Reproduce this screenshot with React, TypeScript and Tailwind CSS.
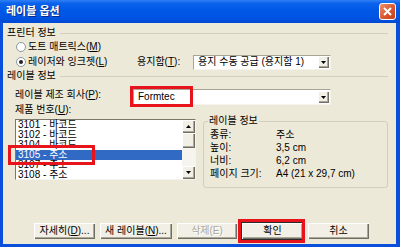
import React from "react";

const face = "bg-[#f1efe6] shadow-[inset_1px_1px_#ffffff,inset_-1px_-1px_#716f64,inset_-2px_-2px_#aca899]";

function Mn({ t, k }: { t: string; k: string }) {
  return (
    <>
      {t}(<u>{k}</u>)
    </>
  );
}

function Section({ title }: { title: string }) {
  return (
    <div className="flex items-center h-[12px]">
      <span>{title}</span>
      <div className="flex-1 h-px bg-[#d0d0bf] ml-[4px]" />
    </div>
  );
}

function Radio({ checked, children }: { checked?: boolean; children: React.ReactNode }) {
  return (
    <div className="flex items-center gap-[2px]">
      <div className="w-[10px] h-[10px] rounded-full border border-[#8a98a6] bg-white flex items-center justify-center">
        {checked && <div className="w-[4px] h-[4px] rounded-full bg-[#222]" />}
      </div>
      <span>{children}</span>
    </div>
  );
}

function DropBtn() {
  return (
    <div className={`w-[11px] h-[12px] flex items-center justify-center ${face}`}>
      <svg width="5" height="3" viewBox="0 0 5 3">
        <path d="M0 0h5L2.5 3z" fill="#000" />
      </svg>
    </div>
  );
}

function Combo({ value, className }: { value: string; className: string }) {
  return (
    <div className={`relative h-[15px] bg-white border border-[#a7a597] border-b-[#f4f3ee] border-r-[#f4f3ee] flex items-center pl-[4px] pr-[1px] ${className}`}>
      <span className="flex-1 whitespace-nowrap">{value}</span>
      <DropBtn />
    </div>
  );
}

function Btn({ w, children, def, disabled }: { w: string; children: React.ReactNode; def?: boolean; disabled?: boolean }) {
  return (
    <div className={`relative h-[16px] ${w}`}>
      <div
        className={`h-full flex items-center justify-center ${face} ${def ? "outline outline-1 outline-[#2b2b2b]" : ""} ${
          disabled ? "text-[#aca899] [text-shadow:1px_1px_#ffffff]" : ""
        }`}
      >
        {children}
      </div>
      {def && <div className="absolute left-[-4px] top-[-4px] w-[67px] h-[24px] border-[3px] border-[#e8141c] pointer-events-none" />}
    </div>
  );
}

const items = ["3101 - 바코드", "3102 - 바코드", "3104 - 바코드", "3105 - 주소", "3107 - 주소", "3108 - 주소"];

export default function App() {
  return (
    <div className="w-[400px] h-[247px] bg-[#0a4fdb] flex flex-col overflow-hidden text-[10px] leading-none text-black font-['Liberation_Sans','Noto_Sans_CJK_KR',sans-serif]">
      {/* title bar */}
      <div className="h-[23px] flex items-center pl-[6px] pr-[4px] bg-[linear-gradient(to_bottom,#2f7ff5_0%,#0a62ec_15%,#0058e6_45%,#0054e3_75%,#0049d4_100%)]">
        <span className="flex-1 text-white font-bold text-[11px] [text-shadow:1px_1px_#0a2b8a]">레이블 옵션</span>
        <div className="w-[17px] h-[17px] rounded-[3px] border border-white bg-[linear-gradient(135deg,#ef8f6c,#d8542c_60%,#c4401b)] flex items-center justify-center">
          <svg width="9" height="9" viewBox="0 0 9 9">
            <path d="M1 1l7 7M8 1L1 8" stroke="#fff" strokeWidth="2" />
          </svg>
        </div>
      </div>

      {/* dialog body */}
      <div className="flex-1 ml-[3px] mr-[4px] mb-[3px] bg-[#ece9d8] pl-[4px] pr-[8px] pt-[4px]">
        <Section title="프린터 정보" />
        <div className="pl-[9px] mt-[1px]">
          <div className="h-[14px] flex items-center">
            <Radio>
              <Mn t="도트 매트릭스" k="M" />
            </Radio>
          </div>
          <div className="h-[16px] flex items-center">
            <div className="w-[121px]">
              <Radio checked>
                <Mn t="레이저와 잉크젯" k="L" />
              </Radio>
            </div>
            <span className="w-[56px]">
              용지함(<u>T</u>):
            </span>
            <Combo value="용지 수동 공급 (용지함 1)" className="w-[138px]" />
          </div>
        </div>

        <Section title="레이블 정보" />

        <div className="pl-[8px] mt-[7px] h-[16px] flex items-start">
          <span className="w-[118px] pt-[1px]">
            레이블 제조 회사(<u>P</u>):
          </span>
          <div className="relative">
            <Combo value="Formtec" className="w-[198px] h-[16px]" />
            <div className="absolute left-[-3px] top-[-3px] w-[63px] h-[21px] border-[3px] border-[#e8141c] pointer-events-none" />
          </div>
        </div>

        <div className="pl-[8px] h-[10px] flex items-center">
          제품 번호(<u>U</u>):
        </div>

        <div className="pl-[8px] flex items-start">
          {/* list box */}
          <div className="relative mt-[4px] w-[181px] h-[61px] bg-white border border-[#7a7868] border-b-[#f4f3ee] border-r-[#f4f3ee] flex">
            <div className="flex-1">
              {items.map((it) => (
                <div
                  key={it}
                  className={`h-[10px] leading-[10px] pl-[2px] whitespace-nowrap ${
                    it.startsWith("3105") ? "bg-[#316ac5] text-white" : ""
                  }`}
                >
                  {it}
                </div>
              ))}
            </div>
            <div className="w-[13px] flex flex-col bg-[#f4f3ee]">
              <div className={`h-[13px] flex items-center justify-center ${face}`}>
                <svg width="5" height="3" viewBox="0 0 5 3">
                  <path d="M0 3h5L2.5 0z" fill="#000" />
                </svg>
              </div>
              <div className={`h-[15px] ${face}`} />
              <div className="flex-1 bg-[#f5f4ef]" />
              <div className={`h-[13px] flex items-center justify-center ${face}`}>
                <svg width="5" height="3" viewBox="0 0 5 3">
                  <path d="M0 0h5L2.5 3z" fill="#000" />
                </svg>
              </div>
            </div>
            <div className="absolute left-[-8px] top-[25px] w-[87px] h-[20px] border-[3px] border-[#e8141c] pointer-events-none" />
          </div>

          {/* label info group */}
          <fieldset className="ml-[7px] w-[185px] h-[73px] border border-[#d0d0bf] rounded-[3px] pl-[6px]">
            <legend className="ml-[-2px] px-[1px] h-[12px] leading-[12px]">레이블 정보</legend>
            <div className="pt-[1px]">
              {[
                ["종류:", "주소"],
                ["높이:", "3,5 cm"],
                ["너비:", "6,2 cm"],
                ["페이지 크기:", "A4 (21 x 29,7 cm)"],
              ].map(([k, v]) => (
                <div key={k} className="h-[13px] flex items-center">
                  <span className="w-[66px]">{k}</span>
                  <span>{v}</span>
                </div>
              ))}
            </div>
          </fieldset>
        </div>

        {/* buttons */}
        <div className="mt-[35px] ml-[27px] flex gap-[5px]">
          <Btn w="w-[61px]">
            자세히(<u>D</u>)...
          </Btn>
          <Btn w="w-[72px]">
            새 레이블(<u>N</u>)...
          </Btn>
          <Btn w="w-[60px]" disabled>
            삭제(E)
          </Btn>
          <Btn w="w-[61px]" def>
            확인
          </Btn>
          <Btn w="w-[61px]">취소</Btn>
        </div>
      </div>
    </div>
  );
}
